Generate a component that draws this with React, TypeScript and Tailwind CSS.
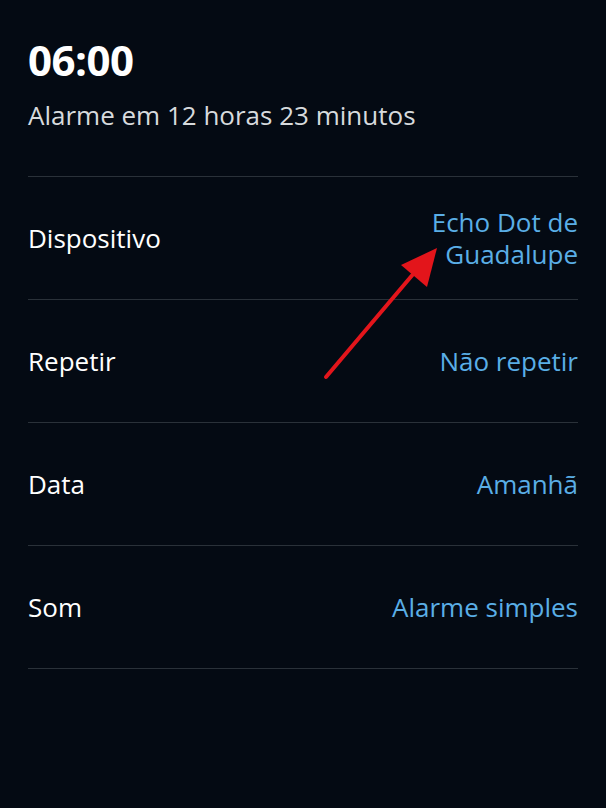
import React from "react";

const rows: { label: string; value: string[] }[] = [
  { label: "Dispositivo", value: ["Echo Dot de", "Guadalupe"] },
  { label: "Repetir", value: ["Não repetir"] },
  { label: "Data", value: ["Amanhã"] },
  { label: "Som", value: ["Alarme simples"] },
];

export default function App() {
  return (
    <div
      className="relative w-[606px] h-[808px] bg-[#040a13] overflow-hidden"
      style={{ fontFamily: '"Open Sans", "Noto Sans", sans-serif' }}
    >
      <div className="px-[28px] pt-[36px]">
        <div className="text-[42px] leading-[48px] font-bold text-white tracking-[-0.5px]">06:00</div>
        <div className="mt-[15px] text-[26px] leading-[32px] text-[#d7dadd]">
          Alarme em 12 horas 23 minutos
        </div>
        <div className="mt-[45px] border-t border-[#2a3139]">
          {rows.map((r) => (
            <div
              key={r.label}
              className="h-[123px] flex items-center justify-between border-b border-[#2a3139]"
            >
              <span className="text-[26px] text-white">{r.label}</span>
              <p className="text-[26px] leading-[32px] text-[#5aaee6] text-right">
                {r.value.map((v, i) => (
                  <React.Fragment key={v}>
                    {i > 0 && <br />}
                    {v}
                  </React.Fragment>
                ))}
              </p>
            </div>
          ))}
        </div>
      </div>
      <svg
        className="absolute left-0 top-0 pointer-events-none"
        width="606"
        height="808"
        viewBox="0 0 606 808"
      >
        <line x1="326" y1="377" x2="420" y2="266" stroke="#e3151b" strokeWidth="4" strokeLinecap="round" />
        <polygon points="437,248 401,265 427,287" fill="#e3151b" />
      </svg>
    </div>
  );
}
